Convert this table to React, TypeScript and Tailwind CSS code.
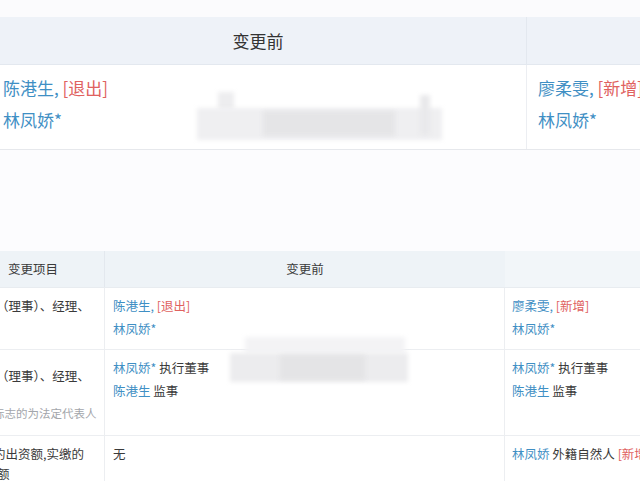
import * as React from "react";

const font = { fontFamily: '"Noto Sans CJK SC", "Noto Sans", sans-serif' };

const Name: React.FC<{ children: React.ReactNode }> = ({ children }) => (
  <span className="text-[#3f8fc4]">{children}</span>
);
const Tag: React.FC<{ children: React.ReactNode }> = ({ children }) => (
  <span className="text-[#e0625f]">{children}</span>
);

// blurred mosaic patch laid over the content
const Patch: React.FC<{ className: string }> = ({ className }) => (
  <div className={`absolute blur-[2px] ${className}`} />
);

export default function App() {
  return (
    <div
      className="relative w-[640px] h-[481px] overflow-hidden bg-[#fcfcfe] text-[#3a3a3a]"
      style={font}
    >
      {/* zoomed top table */}
      <div className="h-[17px] bg-[#fbfbfd]" />
      <div className="flex h-[48px] bg-[#eef2f8] border-b border-[#e3e8ef]">
        <div className="w-[527px] shrink-0 pr-[10px] flex items-center justify-center text-[17px] text-[#333] border-r border-[#e3e8ef]">
          变更前
        </div>
        <div className="flex-1" />
      </div>
      <div className="flex h-[85px] bg-white border-b border-[#e6e8ec] text-[17px] leading-[32px]">
        <div className="w-[527px] shrink-0 pl-[3px] pt-[7px] border-r border-[#eceef2]">
          <div>
            <Name>陈港生,</Name> <Tag>[退出]</Tag>
          </div>
          <div>
            <Name>林凤娇*</Name>
          </div>
        </div>
        <div className="flex-1 pl-[11px] pt-[7px] whitespace-nowrap">
          <div>
            <Name>廖柔雯,</Name> <Tag>[新增]</Tag>
          </div>
          <div>
            <Name>林凤娇*</Name>
          </div>
        </div>
      </div>

      <div className="h-[101px] bg-[#fcfcfe]" />

      {/* lower table */}
      <div className="text-[12.5px]">
        <div className="flex h-[37px] bg-[#eef3f7] border-b border-[#e8ecf0]">
          <div className="w-[105px] shrink-0 pl-[8px] flex items-center border-r border-[#e3e8ee]">
            变更项目
          </div>
          <div className="w-[400px] shrink-0 flex items-center justify-center">变更前</div>
          <div className="flex-1 bg-[#f2f6f9]" />
        </div>

        <div className="flex h-[62px] bg-white border-b border-[#eceef1] leading-[23px]">
          <div className="w-[105px] shrink-0 pt-[6px] overflow-hidden whitespace-nowrap border-r border-[#eceef1]">
            <div className="-ml-[4px]">（理事）、经理、</div>
          </div>
          <div className="w-[400px] shrink-0 pl-[8px] pt-[6px] border-r border-[#eceef1]">
            <div>
              <Name>陈港生,</Name> <Tag>[退出]</Tag>
            </div>
            <div>
              <Name>林凤娇*</Name>
            </div>
          </div>
          <div className="flex-1 pl-[7px] pt-[6px] whitespace-nowrap">
            <div>
              <Name>廖柔雯,</Name> <Tag>[新增]</Tag>
            </div>
            <div>
              <Name>林凤娇*</Name>
            </div>
          </div>
        </div>

        <div className="flex h-[86px] bg-white border-b border-[#eceef1] leading-[23px]">
          <div className="w-[105px] shrink-0 pt-[14px] overflow-hidden whitespace-nowrap border-r border-[#eceef1]">
            <div className="-ml-[4px]">（理事）、经理、</div>
            <div className="-ml-[7px] mt-[15px] text-[11.5px] text-[#a3a6ab]">标志的为法定代表人</div>
          </div>
          <div className="w-[400px] shrink-0 pl-[8px] pt-[6px] border-r border-[#eceef1]">
            <div>
              <Name>林凤娇*</Name> 执行董事
            </div>
            <div>
              <Name>陈港生</Name> 监事
            </div>
          </div>
          <div className="flex-1 pl-[7px] pt-[6px] whitespace-nowrap">
            <div>
              <Name>林凤娇*</Name> 执行董事
            </div>
            <div>
              <Name>陈港生</Name> 监事
            </div>
          </div>
        </div>

        <div className="flex h-[60px] bg-white leading-[20px]">
          <div className="w-[105px] shrink-0 pt-[8px] overflow-hidden whitespace-nowrap border-r border-[#eceef1]">
            <div className="-ml-[7px]">约出资额,实缴的</div>
            <div className="-ml-[3px]">额</div>
          </div>
          <div className="w-[400px] shrink-0 pl-[8px] pt-[8px] border-r border-[#eceef1]">无</div>
          <div className="flex-1 pl-[7px] pt-[8px] whitespace-nowrap">
            <Name>林凤娇</Name> 外籍自然人 <Tag>[新增]</Tag>
          </div>
        </div>
      </div>

      {/* mosaic over hidden text */}
      <Patch className="left-[218px] top-[92px] w-[16px] h-[18px] bg-[#ededef]" />
      <Patch className="left-[197px] top-[108px] w-[245px] h-[32px] bg-[#efeff1]" />
      <Patch className="left-[263px] top-[111px] w-[132px] h-[25px] bg-[#e5e5e7]" />
      <Patch className="left-[420px] top-[95px] w-[10px] h-[40px] bg-[#e9e9eb]" />
      <Patch className="left-[245px] top-[337px] w-[160px] h-[16px] bg-[#f3f3f5]" />
      <Patch className="left-[230px] top-[353px] w-[178px] h-[29px] bg-[#ececee]" />
      <Patch className="left-[280px] top-[355px] w-[85px] h-[25px] bg-[#e4e4e6]" />
    </div>
  );
}
